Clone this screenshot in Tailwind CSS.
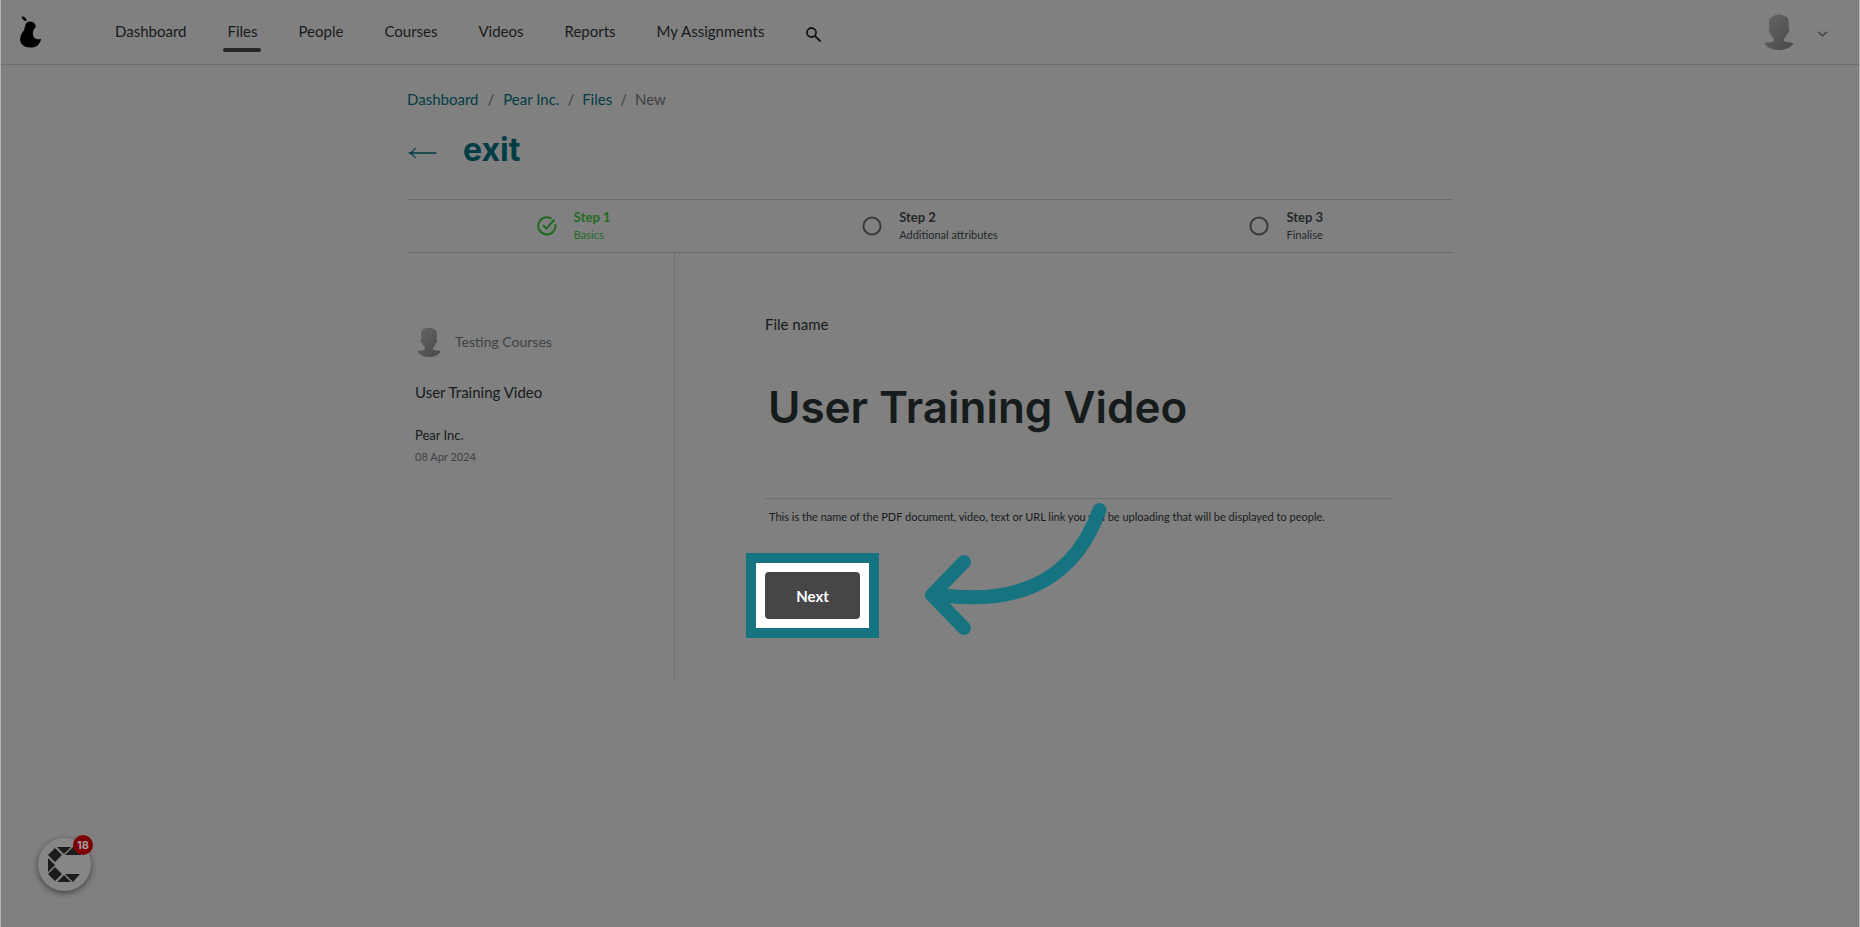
<!DOCTYPE html>
<html lang="en">
<head>
<meta charset="utf-8">
<title>New file - Pear Inc.</title>
<script src="https://cdn.jsdelivr.net/npm/@tailwindcss/browser@4"></script>
</head>
<body class="min-h-screen border-x border-[#b4b4b4] bg-[#808080] font-['Lato',sans-serif] text-[15px] leading-5 text-[#161b1c]">

<svg class="absolute size-0" aria-hidden="true">
  <defs>
    <linearGradient id="avatar-fill" x1="0" y1="0" x2="1" y2="1">
      <stop offset="0" stop-color="#666"/><stop offset="1" stop-color="#484848"/>
    </linearGradient>
    <symbol id="avatar" viewBox="0 0 30 36" preserveAspectRatio="none">
      <path fill="url(#avatar-fill)" d="M5 8C5 4.500 7 2.500 9.500 2 11.500.8 14 .6 16 1c1.500-.6 3 0 3.500 1 2.500 0 4.500 1.500 5 4 .5 2.500.2 5 0 8.500 1.500.2 1 4.200-.9 4.800-.9 2.500-2.200 4.200-3.600 5.700v2c2 1.300 6 1.200 9.500 2C27 34 21 36 15 36S3 34 .5 29c3.500-.8 7.500-.7 9.500-2v-2C8.500 23.500 7.300 21.800 6.400 19.300c-1.900-.6-2.400-4.600-.9-4.800C5.200 12 5 10 5 8z"/>
    </symbol>
  </defs>
</svg>

<header class="flex h-[65px] items-center border-b border-[#687070] pl-[18px] pr-[31px]">
  <a href="#" aria-label="Pear Inc." class="w-[92px] shrink-0">
    <svg width="24" height="34" viewBox="0 0 24 34">
      <path d="M2.500 1.500C5 1 7.200 2.800 7.800 6 5 6.200 3.200 4.200 2.500 1.500z"/>
      <path d="M6.500 9.500C7.800 5.800 13.800 5.400 15.500 8.500c.5 1.200 1.300 2 1.400 3.500C13 14.500 12.300 23.300 18 24.300c1.500.2 2.800-.1 4-.6C21.500 29 17.500 32.500 11.500 32.500 5 32.500 1.200 29 1.200 24.500 1.200 18.500 5.500 16.500 5.700 12.500z"/>
    </svg>
  </a>
  <nav class="flex gap-[33px] pb-0.5">
    <a href="#" class="px-1">Dashboard</a>
    <a href="#" class="relative px-1" aria-current="page">Files<span class="absolute inset-x-0 top-[27px] h-1 rounded-full bg-[#242828]"></span></a>
    <a href="#" class="px-1">People</a>
    <a href="#" class="px-1">Courses</a>
    <a href="#" class="px-1">Videos</a>
    <a href="#" class="px-1">Reports</a>
    <a href="#" class="px-1">My Assignments</a>
  </nav>
  <button aria-label="Search" class="ml-[37px] pt-1.5">
    <svg width="18" height="18" viewBox="0 0 18 18" fill="none" stroke="#111616" stroke-width="1.800"><circle cx="6.500" cy="6.500" r="4.500"/><path d="M10 10l5.500 5.500"/></svg>
  </button>
  <button aria-label="Account menu" class="ml-auto flex items-center gap-[23px]">
    <svg width="30" height="36"><use href="#avatar" width="30" height="36"/></svg>
    <svg width="11" height="6" viewBox="0 0 11 6" class="mt-1" fill="none" stroke="#384348" stroke-width="1.500"><path d="M1 .8l4.500 4 4.500-4"/></svg>
  </button>
</header>

<main class="mx-auto max-w-[1046px] pt-6">
  <nav aria-label="Breadcrumb" class="flex gap-2 text-[#003d44]">
    <a href="#">Dashboard</a><span class="px-px text-[#3c4040]">/</span>
    <a href="#">Pear Inc.</a><span class="text-[#3c4040]">/</span>
    <a href="#">Files</a><span class="text-[#3c4040]">/</span>
    <span class="text-[#3c4040]">New</span>
  </nav>
  <div class="flex items-center gap-[26px] pt-[21px] pl-px text-[#003d44]">
    <a href="#" aria-label="Back" class="pt-1.5">
      <svg width="29" height="12" viewBox="0 0 29 12" fill="none" stroke="currentColor" stroke-width="1.300"><path d="M28.500 6H2M7.500 1Q5 5 1.500 6 5 7 7.500 11"/></svg>
    </a>
    <h1 class="font-['Inter',sans-serif] text-[32px] leading-10 font-bold">exit</h1>
  </div>

  <ol class="mt-[29px] flex h-[54px] items-center justify-around border-y border-[#6a6a6a] px-1 text-[11px] leading-[18px]">
    <li class="flex items-center gap-[17px] text-[#1f6a1f]">
      <svg width="20" height="20" viewBox="0 0 20 20" fill="none" stroke="currentColor" stroke-width="2"><path d="M18.300 8.200A8.600 8.600 0 1 1 14.500 2.600M6 9.200l3.400 3.400L17.500 3.500"/></svg>
      <span class="flex flex-col"><b class="text-[13px]">Step 1</b>Basics</span>
    </li>
    <li class="flex items-center gap-[17px] text-[#22282a]">
      <svg width="20" height="20" viewBox="0 0 20 20" fill="none" stroke="#383c3c" stroke-width="2"><circle cx="10" cy="10" r="8.600"/></svg>
      <span class="flex flex-col"><b class="text-[13px]">Step 2</b>Additional attributes</span>
    </li>
    <li class="flex items-center gap-[17px] text-[#22282a]">
      <svg width="20" height="20" viewBox="0 0 20 20" fill="none" stroke="#383c3c" stroke-width="2"><circle cx="10" cy="10" r="8.600"/></svg>
      <span class="flex flex-col"><b class="text-[13px]">Step 3</b>Finalise</span>
    </li>
  </ol>

  <div class="flex min-h-[426px]">
    <aside class="w-[268px] shrink-0 border-r border-[#687070] pt-[74px] pl-2">
      <div class="flex items-center gap-3.5 pl-0.5 text-sm text-[#3c4346]">
        <svg width="24" height="30"><use href="#avatar" width="24" height="30"/></svg>
        <span>Testing Courses</span>
      </div>
      <p class="mt-[25px]">User Training Video</p>
      <p class="mt-[23px] text-[13px]">Pear Inc.</p>
      <p class="mt-0.5 text-[11px] text-[#3c4346]">08 Apr 2024</p>
    </aside>
    <form class="flex-1 pt-[61px] pr-[61px] pl-[90px]">
      <label for="file-name" class="block">File name</label>
      <input id="file-name" type="text" value="User Training Video" class="block h-[165px] w-full border-b border-[#687070] px-[3px] pb-[18px] font-['Inter',sans-serif] text-[44px] font-semibold outline-none">
      <div class="relative">
        <p class="pt-2 pl-1 text-[11px]">This is the name of the PDF document, video, text or URL link you will be uploading that will be displayed to people.</p>
        <svg class="absolute top-1 left-[159px]" width="184" height="134" viewBox="0 0 184 134" fill="none" stroke="#157480" stroke-width="14" stroke-linecap="round" stroke-linejoin="round">
          <path d="M175.500 7C156 62 112 105 15 92L8 92M40 59L8 92L40 125"/>
        </svg>
      </div>
      <div class="-ml-[19px] mt-[26px] inline-block border-[10px] border-[#157480] bg-white p-[9px]">
        <button type="button" class="block h-[47px] w-[95px] rounded bg-[#464649] font-bold text-white">Next</button>
      </div>
    </form>
  </div>
</main>

<button aria-label="Open help, 18 unread" class="fixed bottom-9 left-[38px] size-[53px] rounded-full bg-[#868686] shadow-[0_2px_6px_rgba(0,0,0,0.5)]">
  <svg width="53" height="53" viewBox="0 0 53 53" fill="#1c1c1c">
    <path d="M19 9h14l-7 7zM35 9l-8 8h16v-8zM17 10l7 7-7 7-7-7zM10 20l7 7-7 7zM17 29l7 7-7 7-7-7zM26 37l7 7H19zM27 36h15l-7 8z"/>
  </svg>
  <span class="absolute -top-[3px] -right-[2px] flex size-5 items-center justify-center rounded-full bg-[#7c0004] font-['Inter',sans-serif] text-[11px] font-bold text-[#a0a0a0]">18</span>
</button>
</body>
</html>
